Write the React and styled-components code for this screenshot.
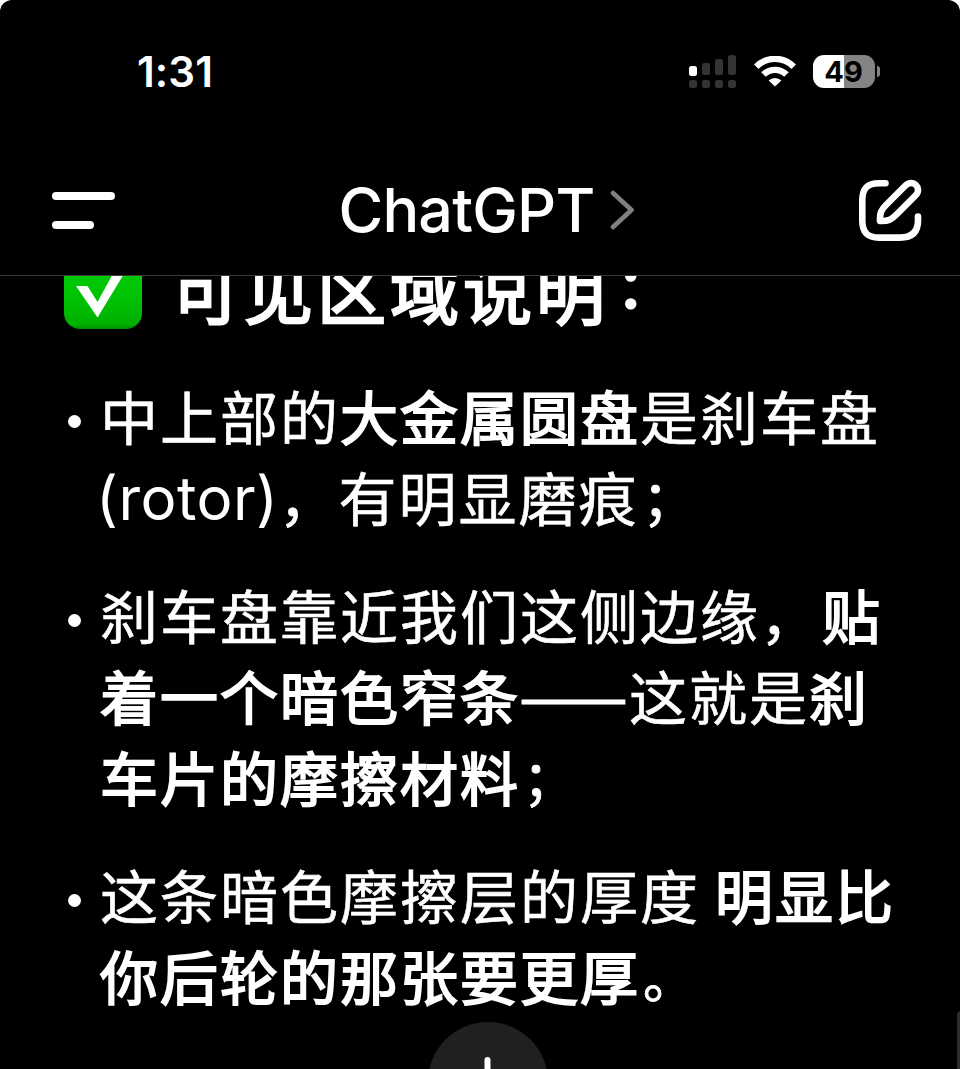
import React from "react";
import styled, { createGlobalStyle } from "styled-components";

const Global = createGlobalStyle`
  * { box-sizing: border-box; }
  html, body { margin: 0; background: #fff; overflow: hidden; }
`;

const Screen = styled.div`
  position: relative;
  display: flex;
  flex-direction: column;
  width: 960px;
  height: 1069px;
  overflow: hidden;
  background: #000;
  color: #fff;
  border-radius: 12px 12px 0 0;
  font-family: Inter, "Noto Sans CJK SC", sans-serif;
`;

const StatusBar = styled.div`
  flex: none;
  display: flex;
  align-items: center;
  justify-content: space-between;
  height: 145px;
  padding: 0 80px 2px 137px;
`;

const Clock = styled.div`
  font-size: 42px;
  line-height: 50px;
  font-weight: 600;
  letter-spacing: 0.1px;
`;

const Indicators = styled.div`
  display: flex;
  align-items: center;
  gap: 17px;
`;

const Battery = styled.div`
  display: flex;
  align-items: center;
  gap: 2px;
`;

const BatteryBody = styled.div`
  width: 62px;
  height: 33px;
  padding-right: 1px;
  border-radius: 11px;
  background: linear-gradient(90deg, #fff ${(p) => p.$level}%, #848484 ${(p) => p.$level}%);
  color: #000;
  font-size: 29px;
  line-height: 33px;
  font-weight: 650;
  text-align: center;
`;

const BatteryTip = styled.div`
  width: 3px;
  height: 11px;
  border-radius: 0 4px 4px 0;
  background: #848484;
`;

const NavBar = styled.div`
  flex: none;
  display: flex;
  align-items: center;
  justify-content: space-between;
  height: 131px;
  padding: 0 38px 0 52px;
  border-bottom: 1px solid #3a3a3a;
`;

const MenuButton = styled.div`
  display: flex;
  flex-direction: column;
  gap: 21px;
  width: 64px;
`;

const MenuBar = styled.div`
  width: ${(p) => p.$width}px;
  height: 8px;
  border-radius: 4px;
  background: #fff;
`;

const Title = styled.div`
  display: flex;
  align-items: center;
  gap: 15px;
  font-size: 61px;
  line-height: 74px;
  font-weight: 500;
  letter-spacing: -0.75px;
`;

const TitleText = styled.span`
  padding: 1px 0 1px 0;
`;

const Content = styled.div`
  flex: 1;
  overflow: hidden;
`;

const Heading = styled.div`
  display: flex;
  align-items: center;
  gap: 29px;
  height: 90px;
  margin-top: -31px;
  padding-left: 64px;
  font-family: "Noto Sans CJK SC", sans-serif;
  font-size: 69px;
  line-height: 90px;
  font-weight: 400;
  letter-spacing: 4px;
  white-space: nowrap;
  -webkit-text-stroke: 2.4px #fff;
`;

const HeadingText = styled.span`
  padding-bottom: 3px;
`;

const Colon = styled.span`
  margin-left: 8px;
  font-size: 55px;
  line-height: 1;
  vertical-align: 12px;
  -webkit-text-stroke: 3px #fff;
`;

const List = styled.div`
  display: flex;
  flex-direction: column;
  gap: 37px;
  margin-top: 40px;
`;

const Item = styled.div`
  display: flex;
  padding-left: 68px;
`;

const Bullet = styled.div`
  flex: none;
  width: 13px;
  height: 13px;
  margin: 40px 19px 0 0;
  border-radius: 50%;
  background: #fff;
`;

const Line = styled.div`
  height: 81px;
  line-height: 81px;
  font-family: "Noto Sans CJK SC", sans-serif;
  font-size: 58px;
  letter-spacing: 2px;
  white-space: nowrap;
  -webkit-text-stroke: 0.6px #fff;
`;

const Strong = styled.span`
  margin-left: ${(p) => p.$shift || 0}px;
  -webkit-text-stroke: 1.9px #fff;
`;

const Mark = styled.span`
  margin-left: ${(p) => p.$shift || 0}px;
  font-size: 52px;
  line-height: 1;
  vertical-align: 2px;
  -webkit-text-stroke: 0.9px #fff;
`;

const Latin = styled.span`
  margin-left: -4px;
  font-family: Inter, sans-serif;
  font-size: 60px;
  line-height: 1;
  letter-spacing: 0.5px;
  vertical-align: 1px;
  -webkit-text-stroke: 0;
`;

const Dash = styled.span`
  font-size: 65px;
  line-height: 1;
  letter-spacing: 0;
  vertical-align: 0;
  margin: 0 1px 0 -1px;
  -webkit-text-stroke: 0.8px #fff;
`;

const ScrollDown = styled.div`
  position: absolute;
  left: 428px;
  top: 1022px;
  display: flex;
  justify-content: center;
  width: 120px;
  height: 120px;
  padding-top: 34px;
  border-radius: 50%;
  background: #202020;
`;

const Scrollbar = styled.div`
  position: absolute;
  left: 957px;
  top: 1011px;
  width: 8px;
  height: 90px;
  border-radius: 4px;
  background: #2f2d2c;
`;

function Signal() {
  return (
    <svg width="48" height="34" viewBox="0 0 48 34">
      <rect x="0" y="11" width="8" height="10" rx="2.5" fill="#fff" />
      <g fill="#343434">
        <rect x="13" y="8" width="8" height="12" rx="2.5" />
        <rect x="26" y="4" width="8" height="16" rx="2.5" />
        <rect x="39" y="0" width="8" height="20" rx="2.5" />
        <rect x="0" y="25" width="8" height="8" rx="2.5" />
        <rect x="13" y="25" width="8" height="8" rx="2.5" />
        <rect x="26" y="25" width="8" height="8" rx="2.5" />
        <rect x="39" y="25" width="8" height="8" rx="2.5" />
      </g>
    </svg>
  );
}

function Wifi() {
  return (
    <svg width="42" height="32" viewBox="0 0 42 32">
      <g fill="none" stroke="#fff" strokeWidth="6.4">
        <path d="M2.3 10.7A26.3 26.3 0 0 1 39.7 10.7" />
        <path d="M9.5 18.6A16.3 16.3 0 0 1 32.5 18.6" />
      </g>
      <path d="M21 30.6L14.6 24.6A9 9 0 0 1 27.4 24.6Z" fill="#fff" />
    </svg>
  );
}

function Chevron() {
  return (
    <svg width="26" height="42" viewBox="0 0 26 42">
      <path d="M3 4L21.5 21L3 38" fill="none" stroke="#808080" strokeWidth="4.6" strokeLinecap="round" strokeLinejoin="round" />
    </svg>
  );
}

function Compose() {
  return (
    <svg width="64" height="64" viewBox="0 0 64 64" fill="none" stroke="#fff" strokeWidth="6.6" strokeLinecap="round" strokeLinejoin="round">
      <path d="M27.5 5.2H21C9.5 5.2 4.3 10.4 4.3 22V42.5C4.3 54.2 9.5 59.6 21 59.6H42C53.7 59.6 60 54.2 60 42.5V38.5" />
      <path d="M22 43C21.7 34 23.6 31.4 28.5 26.5L47.5 7.5C54.8 0.2 64.8 10.2 57.5 17.5L38.5 36.5C33.6 41.4 31 43.3 22 43Z" />
    </svg>
  );
}

function CheckMark() {
  return (
    <svg width="78" height="78" viewBox="0 0 78 78">
      <defs>
        <linearGradient id="green" x1="0" y1="0" x2="0" y2="1">
          <stop offset="0" stopColor="#00d20c" />
          <stop offset="0.6" stopColor="#00c203" />
          <stop offset="0.94" stopColor="#00b000" />
          <stop offset="1" stopColor="#008c00" />
        </linearGradient>
      </defs>
      <rect width="78" height="78" rx="16" fill="url(#green)" />
      <path d="M12 35H23.5L33.5 51L57 8H69L33.5 66.5Z" fill="#fff" />
    </svg>
  );
}

function ArrowDown() {
  return (
    <svg width="44" height="54" viewBox="0 0 44 54" fill="none" stroke="#fff" strokeWidth="6" strokeLinecap="round" strokeLinejoin="round">
      <path d="M21.5 4V50M3 32L21.5 50L40 32" />
    </svg>
  );
}

export default function App() {
  return (
    <>
      <Global />
      <Screen>
        <StatusBar>
          <Clock>1:31</Clock>
          <Indicators>
            <Signal />
            <Wifi />
            <Battery>
              <BatteryBody $level={50}>49</BatteryBody>
              <BatteryTip />
            </Battery>
          </Indicators>
        </StatusBar>
        <NavBar>
          <MenuButton>
            <MenuBar $width={63} />
            <MenuBar $width={42} />
          </MenuButton>
          <Title>
            <TitleText>ChatGPT</TitleText>
            <Chevron />
          </Title>
          <Compose />
        </NavBar>
        <Content>
          <Heading>
            <CheckMark />
            <HeadingText>可见区域说明<Colon>：</Colon></HeadingText>
          </Heading>
          <List>
            <Item>
              <Bullet />
              <div>
                <Line>中上部的<Strong>大金属圆盘</Strong>是刹车盘</Line>
                <Line><Latin>(rotor)</Latin>，有明显磨痕<Mark $shift={4}>；</Mark></Line>
              </div>
            </Item>
            <Item>
              <Bullet />
              <div>
                <Line>刹车盘靠近我们这侧边缘，<Strong $shift={2}>贴</Strong></Line>
                <Line><Strong>着一个暗色窄条</Strong><Dash>——</Dash>这就是<Strong>刹</Strong></Line>
                <Line><Strong>车片的摩擦材料</Strong><Mark $shift={3}>；</Mark></Line>
              </div>
            </Item>
            <Item>
              <Bullet />
              <div>
                <Line>这条暗色摩擦层的厚度 <Strong>明显比</Strong></Line>
                <Line><Strong>你后轮的那张要更厚</Strong><Mark $shift={3}>。</Mark></Line>
              </div>
            </Item>
          </List>
        </Content>
        <ScrollDown>
          <ArrowDown />
        </ScrollDown>
        <Scrollbar />
      </Screen>
    </>
  );
}
